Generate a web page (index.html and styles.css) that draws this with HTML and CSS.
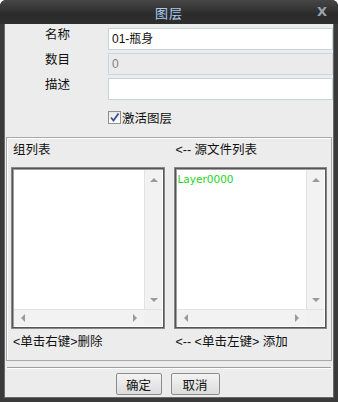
FILE: index.html
```html
<!DOCTYPE html>
<html>
<head>
<meta charset="utf-8">
<link rel="stylesheet" href="styles.css">
</head>
<body>
<div class="window">
  <div class="titlebar">
    <span class="title">图层</span>
    <span class="close">X</span>
  </div>
  <div class="content">
    <div class="form">
      <div class="row">
        <span class="label">名称</span>
        <div class="input">01-瓶身</div>
      </div>
      <div class="row">
        <span class="label">数目</span>
        <div class="input disabled">0</div>
      </div>
      <div class="row">
        <span class="label">描述</span>
        <div class="input"></div>
      </div>
      <div class="checkrow">
        <span class="checkbox">
          <svg width="11" height="11" viewBox="0 0 11 11"><path d="M2 5.5 L4.5 8.5 L9.5 1.5" fill="none" stroke="#3b4f8f" stroke-width="1.8"/></svg>
        </span>
        <span class="checklabel">激活图层</span>
      </div>
    </div>
    <div class="group">
      <div class="col">
        <div class="caption">组列表</div>
        <div class="list">
          <div class="listbody">
            <div class="items"></div>
            <div class="vscroll"><span class="arr up"></span><span class="arr down"></span></div>
          </div>
          <div class="hrow">
            <div class="hscroll"><span class="arr left"></span><span class="arr right"></span></div>
            <div class="corner"></div>
          </div>
        </div>
        <div class="hint">&lt;单击右键&gt;删除</div>
      </div>
      <div class="col">
        <div class="caption">&lt;-- 源文件列表</div>
        <div class="list">
          <div class="listbody">
            <div class="items"><div class="item">Layer0000</div></div>
            <div class="vscroll"><span class="arr up"></span><span class="arr down"></span></div>
          </div>
          <div class="hrow">
            <div class="hscroll"><span class="arr left"></span><span class="arr right"></span></div>
            <div class="corner"></div>
          </div>
        </div>
        <div class="hint">&lt;-- &lt;单击左键&gt; 添加</div>
      </div>
    </div>
    <div class="separator"></div>
    <div class="buttons">
      <button class="btn ok">确定</button>
      <button class="btn cancel">取消</button>
    </div>
  </div>
</div>
</body>
</html>
```
FILE: styles.css
```css
html, body {
  margin: 0;
  padding: 0;
  background: #ffffff;
}
body {
  font-family: "Liberation Sans", "Noto Sans CJK SC", sans-serif;
  font-size: 12px;
  color: #111;
}
.window {
  width: 338px;
  height: 402px;
  box-sizing: border-box;
  background: #3a3a3a;
  border-radius: 6px 6px 0 0;
  display: flex;
  flex-direction: column;
  padding: 0 4px 4px 4px;
}
.titlebar {
  height: 24px;
  margin: 0 -4px;
  background: linear-gradient(#464646, #2b2b2b 60%, #2e2e2e);
  border-radius: 6px 6px 0 0;
  position: relative;
  display: flex;
  align-items: center;
  justify-content: center;
}
.title {
  color: #a9cbee;
  font-size: 13px;
  letter-spacing: 1px;
}
.close {
  position: absolute;
  right: 11px;
  top: 4px;
  color: #9aa4ae;
  font-weight: bold;
  font-size: 13px;
  font-family: "DejaVu Sans", sans-serif;
}
.content {
  flex: 1;
  background: #ececec;
  box-shadow: inset 1px 0 0 #6a6a6a, inset -1px 0 0 #6a6a6a, inset 0 -1px 0 #6a6a6a;
  display: flex;
  flex-direction: column;
}
.form {
  padding: 4px 1px 0 41px;
  display: flex;
  flex-direction: column;
  gap: 3px;
}
.row {
  display: flex;
  align-items: flex-start;
  height: 22px;
}
.label {
  width: 63px;
  padding-top: 0;
  line-height: 14px;
  font-size: 12.5px;
}
.input {
  flex: 1;
  height: 22px;
  box-sizing: border-box;
  background: #fff;
  border: 1px solid #c3d6e0;
  padding: 0 0 0 3px;
  line-height: 20px;
  font-size: 12px;
}
.input.disabled {
  background: #ebebeb;
  color: #808080;
  border-color: #c8d6de;
}
.checkrow {
  display: flex;
  align-items: center;
  margin-left: 63px;
  margin-top: 6px;
  height: 16px;
}
.checkbox {
  width: 11px;
  height: 11px;
  border: 1px solid #8f8f8f;
  background: linear-gradient(#e6e6e6, #fff);
  display: flex;
  margin-right: 1px;
}
.checklabel {
  font-size: 12.5px;
}
.group {
  margin: 12px 2px 0 2px;
  height: 224px;
  box-sizing: border-box;
  border: 1px solid #a8a8a8;
  box-shadow: inset 1px 1px 0 #fff;
  display: flex;
  gap: 9px;
  padding: 0 4px 0 4px;
}
.col {
  width: 154px;
  display: flex;
  flex-direction: column;
}
.caption {
  height: 29px;
  line-height: 24px;
  padding-left: 2px;
  font-size: 12.5px;
}
.list {
  height: 162px;
  box-sizing: border-box;
  border: 1px solid #888;
  box-shadow: inset 0 0 0 1px #555, inset 2px 2px 0 #a0a0a0;
  padding: 2px;
  display: flex;
  flex-direction: column;
  background: #fff;
}
.listbody {
  flex: 1;
  display: flex;
}
.items {
  flex: 1;
  padding: 3px 0 0 1px;
}
.item {
  color: #1ed41e;
  font-family: "DejaVu Sans", sans-serif;
  font-size: 10.5px;
}
.vscroll {
  width: 17px;
  background: #f2f2f2;
  border-left: 1px solid #e2e2e2;
  position: relative;
}
.hrow {
  height: 17px;
  display: flex;
}
.hscroll {
  flex: 1;
  background: #f2f2f2;
  border-top: 1px solid #e2e2e2;
  position: relative;
}
.corner {
  width: 18px;
  background: #f0f0f0;
  border-top: 1px solid #e2e2e2;
}
.arr {
  position: absolute;
  width: 0;
  height: 0;
}
.arr.up {
  left: 5px;
  top: 8px;
  border-left: 4px solid transparent;
  border-right: 4px solid transparent;
  border-bottom: 4px solid #9a9a9a;
}
.arr.down {
  left: 5px;
  bottom: 7px;
  border-left: 4px solid transparent;
  border-right: 4px solid transparent;
  border-top: 4px solid #9a9a9a;
}
.arr.left {
  left: 7px;
  top: 4px;
  border-top: 4px solid transparent;
  border-bottom: 4px solid transparent;
  border-right: 4px solid #9a9a9a;
}
.arr.right {
  right: 7px;
  top: 4px;
  border-top: 4px solid transparent;
  border-bottom: 4px solid transparent;
  border-left: 4px solid #9a9a9a;
}
.hint {
  padding: 6px 0 0 2px;
  font-size: 12.5px;
  line-height: 14px;
}
.separator {
  margin: 6px 3px 0 3px;
  height: 1px;
  background: #a0a0a0;
  border-bottom: 1px solid #fff;
}
.buttons {
  display: flex;
  justify-content: center;
  gap: 9px;
  margin-top: 4px;
  padding-right: 3px;
}
.btn {
  height: 22px;
  padding: 0;
  border: 1px solid #8c8c8c;
  border-radius: 2px;
  background: linear-gradient(#f4f4f4, #dcdcdc);
  font-family: "Liberation Sans", "Noto Sans CJK SC", sans-serif;
  font-size: 12.5px;
  color: #111;
}
.btn.ok { width: 46px; }
.btn.cancel { width: 49px; }
```
